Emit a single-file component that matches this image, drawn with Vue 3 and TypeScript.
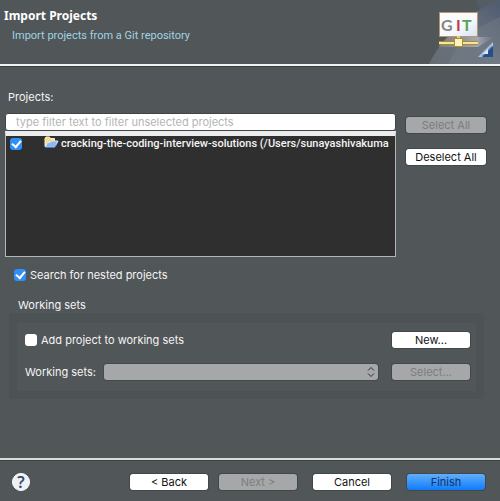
<script setup lang="ts">
import { ref } from 'vue'

interface Project {
  label: string
  checked: boolean
}

const filter = ref('')
const nested = ref(true)
const addToSets = ref(false)
const projects = ref<Project[]>([
  { label: 'cracking-the-coding-interview-solutions (/Users/sunayashivakuma', checked: true },
])

function setAll(value: boolean): void {
  projects.value.forEach((p) => (p.checked = value))
}
</script>

<template>
  <div class="wizard">
    <header class="banner">
      <div class="heading">
        <h1>Import Projects</h1>
        <p>Import projects from a Git repository</p>
      </div>
      <svg class="art" viewBox="0 0 72 64" aria-hidden="true">
        <defs>
          <linearGradient id="beam" x1="0" y1="1" x2="1" y2="0">
            <stop offset="0" stop-color="#666c72" />
            <stop offset="0.5" stop-color="#6a737e" />
            <stop offset="1" stop-color="#4e5b70" />
          </linearGradient>
          <linearGradient id="screen" x1="0" y1="0" x2="1" y2="1">
            <stop offset="0" stop-color="#ffffff" />
            <stop offset="0.6" stop-color="#f5f8fc" />
            <stop offset="1" stop-color="#d5e1f1" />
          </linearGradient>
          <linearGradient id="corner" x1="0" y1="0" x2="1" y2="1">
            <stop offset="0.3" stop-color="#9fc1e6" />
            <stop offset="1" stop-color="#2f5fa0" />
          </linearGradient>
          <linearGradient id="shade" x1="0" y1="0" x2="1" y2="0">
            <stop offset="0" stop-color="#8e8d9a" stop-opacity="0.5" />
            <stop offset="0.7" stop-color="#b3b0c0" stop-opacity="0.8" />
            <stop offset="1" stop-color="#8e8d9a" stop-opacity="0.1" />
          </linearGradient>
        </defs>
        <path d="M1 64C12 42 34 14 72 0V64Z" fill="url(#beam)" />
        <path d="M20 64C28 46 44 28 72 17V64Z" fill="#7b8590" opacity="0.35" />
        <path d="M47 0C51 4 52 8 51 12L72 2V0Z" fill="#56606d" opacity="0.6" />
        <path d="M10 47L20 37H66L50 47Z" fill="url(#shade)" />
        <rect x="11.5" y="12.5" width="38" height="24" fill="url(#screen)" stroke="#b5966f" />
        <g class="letters">
          <text x="13" y="31" fill="#858585">G</text>
          <text x="28" y="31" fill="#bf3f48">I</text>
          <text x="34" y="31" fill="#54a552">T</text>
        </g>
        <path d="M30.500 36V39" stroke="#e6cf68" stroke-width="3" />
        <rect x="11" y="41" width="39" height="4" fill="#a68c2e" />
        <rect x="11" y="42" width="39" height="2" fill="#f6e88f" />
        <rect x="26.500" y="38.500" width="8" height="8" fill="#fdf5bf" stroke="#b08d2f" />
        <path d="M65 42V57H50Z" fill="#a9c3e2" />
        <path d="M64 45V56H53Z" fill="url(#corner)" />
        <path d="M65 46V57H54Z" fill="#274d8c" />
        <path d="M60 49V54H55Z" fill="#dfeaf6" />
      </svg>
    </header>

    <main class="content">
      <label class="caption" for="filter">Projects:</label>
      <div class="picker">
        <div class="chooser">
          <input id="filter" v-model="filter" class="filter" type="text" placeholder="type filter text to filter unselected projects" />
          <div class="list">
            <label v-for="p in projects" :key="p.label" class="row">
              <input v-model="p.checked" class="check" type="checkbox" />
              <svg class="folder" viewBox="0 0 15 12" aria-hidden="true">
                <path d="M1 10.500V2.500L2 1H5.500L6.500 2.500H10.500V10.500Z" fill="#f7dd93" stroke="#fff0c2" />
                <path d="M3.500 6.500H6L7.500 5H14L11 11H1.500Z" fill="#8fb8ee" stroke="#d7e7fb" />
                <path d="M1.500 11.300H11L12.500 8.500" fill="none" stroke="#3f72bd" />
              </svg>
              <span>{{ p.label }}</span>
            </label>
          </div>
        </div>
        <div class="side">
          <button type="button" class="btn" disabled @click="setAll(true)">Select All</button>
          <button type="button" class="btn" @click="setAll(false)">Deselect All</button>
        </div>
      </div>

      <label class="option nested">
        <input v-model="nested" class="check" type="checkbox" />
        <span>Search for nested projects</span>
      </label>

      <section class="sets" aria-labelledby="sets-title">
        <h2 id="sets-title">Working sets</h2>
        <div class="frame">
          <div class="panel">
            <label class="option">
              <input v-model="addToSets" class="check" type="checkbox" />
              <span>Add project to working sets</span>
            </label>
            <button type="button" class="btn">New...</button>
            <div class="combo">
              <label for="sets">Working sets:</label>
              <span class="select">
                <select id="sets" disabled></select>
                <svg viewBox="0 0 8 12" aria-hidden="true">
                  <path d="M1 4.500L4 1.500L7 4.500M1 7.500L4 10.500L7 7.500" />
                </svg>
              </span>
            </div>
            <button type="button" class="btn" disabled>Select...</button>
          </div>
        </div>
      </section>
    </main>

    <footer class="actions">
      <button type="button" class="help" aria-label="Help">?</button>
      <div class="steps">
        <button type="button" class="btn">&lt; Back</button>
        <button type="button" class="btn" disabled>Next &gt;</button>
      </div>
      <button type="button" class="btn">Cancel</button>
      <button type="button" class="btn primary">Finish</button>
    </footer>
  </div>
</template>

<style>
body {
  background: #515658;
}
</style>

<style scoped>
* {
  box-sizing: border-box;
}

.wizard {
  display: flex;
  flex-direction: column;
  min-height: 100vh;
  color: #f4f4f4;
  background: #515658;
  font: 400 11px/16px Inter, 'Liberation Sans', sans-serif;
}

.banner {
  display: flex;
  justify-content: space-between;
  border-bottom: 2px solid #f2f2f0;
  box-shadow: 0 1px #363f40;
}

.heading {
  padding: 8px 4px 0;
}

h1 {
  margin: 0;
  color: #fff;
  font: 700 12px/16px 'Noto Sans', sans-serif;
}

p {
  margin: 4px 0 0 8px;
  color: #9fd3e2;
  font: 400 11px/16px Roboto, sans-serif;
}

.art {
  display: block;
  flex: none;
  width: 72px;
  height: 64px;
}

.letters {
  font: 700 16px Lato, sans-serif;
}

.content {
  flex: 1;
  padding: 23px 10px 0 5px;
}

.caption {
  display: block;
  margin-left: 3px;
}

.picker {
  display: flex;
  gap: 10px;
  padding-right: 4px;
  margin-top: 8px;
}

.chooser {
  flex: 1;
  min-width: 0;
}

.filter {
  display: block;
  width: 100%;
  height: 18px;
  padding: 0 10px;
  color: #222;
  background: #fff;
  border: 1px solid #3f4446;
  border-radius: 3px;
  font: inherit;
}

.filter::placeholder {
  color: #b4b4b4;
}

.list {
  height: 126px;
  background: #2f2f2f;
  border: 1px solid #b5b5b5;
  border-top: 5px solid #ececec;
  overflow: hidden;
}

.row {
  display: flex;
  align-items: center;
  height: 16px;
  padding-left: 4px;
  white-space: nowrap;
  font-family: Roboto, sans-serif;
  font-weight: 500;
}

.folder {
  flex: none;
  width: 15px;
  height: 12px;
  margin: 0 2px 4px 22px;
}

.check {
  display: grid;
  place-items: center;
  flex: none;
  appearance: none;
  width: 12px;
  height: 12px;
  margin: 0;
  background: #fff;
  border-radius: 3px;
}

.check:checked {
  background: #2f8ff8;
}

.check:checked::after {
  content: '';
  width: 7px;
  height: 4px;
  margin-bottom: 2px;
  border: solid #fff;
  border-width: 0 0 2px 2px;
  transform: rotate(-50deg);
}

.side {
  display: flex;
  flex-direction: column;
  gap: 16px;
  width: 80px;
  padding-top: 4px;
}

.btn {
  width: 78px;
  height: 16px;
  padding: 1px 0 0;
  color: #111;
  background: #fff;
  border: 0;
  border-radius: 3px;
  box-shadow: 0 0 0 1px #424749;
  font: inherit;
  line-height: 15px;
}

.side .btn {
  width: 100%;
}

.btn:disabled {
  color: #7c7e7f;
  background: #a5a7a8;
}

.btn.primary {
  color: #12355f;
  background: linear-gradient(#62aefb, #0f7cfb);
}

.option {
  display: flex;
  align-items: center;
  gap: 4px;
}

.nested {
  margin: 10px 0 0 9px;
}

.sets {
  margin: 14px 6px 0 4px;
}

h2 {
  margin: 0 0 0 9px;
  font: inherit;
}

.frame {
  padding: 10px 8px 8px;
  background: #4d5254;
  border-radius: 4px;
}

.panel {
  display: grid;
  grid-template-columns: 1fr auto;
  gap: 16px 14px;
  align-items: center;
  padding: 9px 6px 11px 8px;
  background: #515658;
}

.combo {
  display: flex;
  align-items: center;
  gap: 8px;
}

.combo label {
  flex: none;
}

.select {
  display: grid;
  flex: 1;
  align-items: center;
}

.select select,
.select svg {
  grid-area: 1 / 1;
}

.select select {
  appearance: none;
  width: 100%;
  height: 16px;
  background: #a5a7a8;
  border: 0;
  border-radius: 3px;
  box-shadow: 0 0 0 1px #454a4c;
  opacity: 1;
}

.select svg {
  z-index: 1;
  justify-self: end;
  width: 8px;
  height: 12px;
  margin-right: 3px;
  fill: none;
  stroke: #2e3234;
  pointer-events: none;
}

.actions {
  display: flex;
  gap: 16px;
  align-items: center;
  height: 43px;
  padding: 3px 15px 0 12px;
  border-top: 2px solid #d9ddd6;
  box-shadow: inset 0 1px #3a4243;
}

.steps {
  display: flex;
  gap: 11px;
}

.help {
  width: 18px;
  height: 18px;
  margin-right: auto;
  padding: 0;
  color: #38496f;
  background: #eef1f5;
  border: 1px solid #fff;
  border-radius: 50%;
  font: 600 16px/16px 'Noto Sans', sans-serif;
}
</style>
